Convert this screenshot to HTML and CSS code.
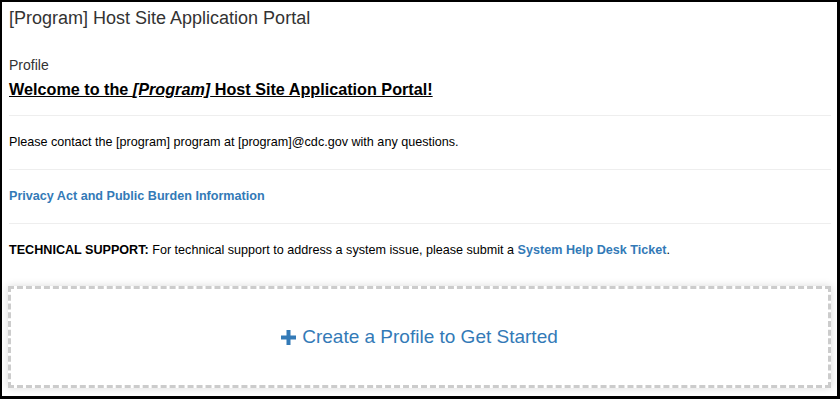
FILE: index.html
```html
<!DOCTYPE html>
<html lang="en">
<head>
    <meta charset="UTF-8">
    <meta name="viewport" content="width=device-width, initial-scale=1.0">
    <title>[Program] Host Site Application Portal</title>
    <link rel="stylesheet" href="styles.css">
</head>
<body>

    <div class="frame">
        <h1 class="page-title">[Program] Host Site Application Portal</h1>

        <div class="intro">
            <p class="crumb">Profile</p>
            <h2 class="welcome">Welcome to the <em>[Program]</em> Host Site Application Portal!</h2>
        </div>

        <div class="info-row">
            Please contact the [program] program at [program]@cdc.gov with any questions.
        </div>

        <div class="info-row">
            <a href="#" class="strong-link">Privacy Act and Public Burden Information</a>
        </div>

        <div class="info-row last">
            <b>TECHNICAL SUPPORT:</b> For technical support to address a system issue, please submit a
            <a href="#" class="strong-link">System Help Desk Ticket</a>.
        </div>

        <!-- Start a new profile -->
        <a href="#" class="create-box">
            <svg class="plus" width="15" height="15" viewBox="0 0 15 15">
                <path d="M5.5 0h4v5.5h5.5v4h-5.5v5.5h-4v-5.5h-5.5v-4h5.5z" fill="#337ab7"/>
            </svg>
            Create a Profile to Get Started
        </a>
    </div>

</body>
</html>
```

FILE: styles.css
```css
body {
    margin: 0;
    padding: 0;
    font-family: "Liberation Sans", Arial, sans-serif;
    background: #000;
}

.frame {
    height: 394px;
    margin: 2px 3px 3px 2px;
    padding: 0 6px 0 7px;
    background: #fff;
    color: #000;
    overflow: hidden;
}

.page-title {
    margin: 0;
    padding-top: 6px;
    font-size: 18px;
    font-weight: normal;
    line-height: 20px;
    color: #333;
}

.intro {
    padding-top: 27px;
    padding-bottom: 15px;
    border-bottom: 1px solid #eee;
}

.crumb {
    margin: 0;
    font-size: 14px;
    line-height: 20px;
    color: #333;
}

.welcome {
    margin: 3px 0 0;
    font-size: 16.2px;
    line-height: 22px;
    text-decoration: underline;
}

.info-row {
    padding: 17px 0 18px;
    font-size: 12.6px;
    line-height: 18px;
    border-bottom: 1px solid #eee;
}

.info-row.last {
    border-bottom: none;
    padding-bottom: 27px;
}

.strong-link {
    color: #337ab7;
    font-weight: bold;
    text-decoration: none;
}

.create-box {
    display: flex;
    align-items: center;
    justify-content: center;
    gap: 6px;
    height: 96px;
    margin-left: -1px;
    border: 3px dashed #ccc;
    box-shadow: 0 0 8px rgba(0, 0, 0, 0.15);
    color: #337ab7;
    font-size: 19px;
    text-decoration: none;
}

.plus {
    margin-top: 1px;
}
```
